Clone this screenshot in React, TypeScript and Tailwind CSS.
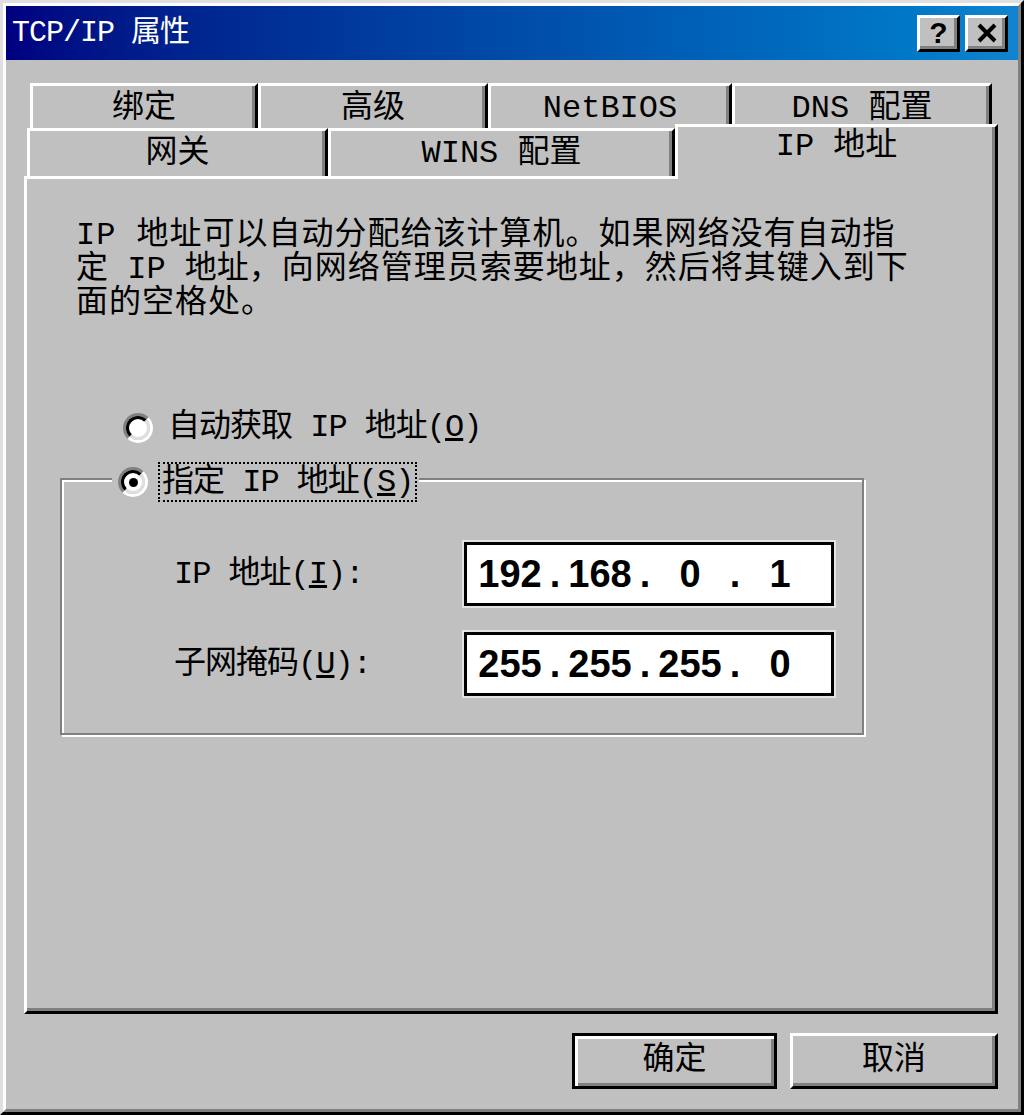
import React from 'react';

const FONT = "font-['Liberation_Mono','Noto_Sans_CJK_SC',monospace]";

/* Win98 style raised bevel */
const RAISED =
  'border-[3px] border-t-white border-l-white border-r-black border-b-black shadow-[inset_-3px_-3px_0_#808080]';

function TitleButton({ children }: { children: React.ReactNode }) {
  return (
    <div className={`flex h-[37px] w-[43px] items-center justify-center bg-[#c0c0c0] ${RAISED}`}>
      {children}
    </div>
  );
}

function Radio({ checked }: { checked?: boolean }) {
  return (
    <span className="inline-flex size-[30px] flex-none rounded-full border-[3px] border-t-[#808080] border-l-[#808080] border-r-white border-b-white">
      <span className="flex size-full items-center justify-center rounded-full border-[3px] border-t-black border-l-black border-r-[#dfdfdf] border-b-[#dfdfdf] bg-white">
        {checked && <span className="size-[9px] rounded-full bg-black" />}
      </span>
    </span>
  );
}

function BackTab({ label, w }: { label: string; w: string }) {
  return (
    <div
      className={`${w} flex h-full justify-center border-t-[3px] border-l-[3px] border-r-[3px] border-t-white border-l-white border-r-black pt-[6px] shadow-[inset_-3px_0_0_#808080] text-[32px] leading-[33px]`}
    >
      {label}
    </div>
  );
}

function IpField({ parts }: { parts: string[] }) {
  return (
    <div className="flex h-[64px] w-[370px] items-center border-[3px] border-black bg-white pl-[8px] font-['Liberation_Sans',sans-serif] text-[38px] font-bold leading-none shadow-[0_0_0_2px_#e4e4e4]">
      {parts.map((p, i) => (
        <React.Fragment key={i}>
          <span className="w-[70px] text-center">{p}</span>
          {i < 3 && <span className="w-[20px] text-center">.</span>}
        </React.Fragment>
      ))}
    </div>
  );
}

export default function App() {
  return (
    <div
      className={`h-[1115px] w-[1024px] overflow-hidden border-[3px] border-t-[#dfdfdf] border-l-[#dfdfdf] border-r-black border-b-black bg-[#c0c0c0] text-black ${FONT}`}
    >
      <div className="flex h-full flex-col border-[3px] border-t-white border-l-white border-r-[#808080] border-b-[#808080]">
        {/* title bar */}
        <div className="flex h-[54px] flex-none items-center bg-linear-to-r from-[#000080] to-[#1084d0] pl-[6px] pr-[10px]">
          <span className="text-[30px] leading-none tracking-[-1px] text-white">TCP/IP 属性</span>
          <div className="ml-auto flex gap-[5px]">
            <TitleButton>
              <span className="font-['Liberation_Sans',sans-serif] text-[30px] font-bold leading-none">?</span>
            </TitleButton>
            <TitleButton>
              <svg width="22" height="20" viewBox="0 0 22 20">
                <path d="M3 2 L19 18 M19 2 L3 18" stroke="black" strokeWidth="4" />
              </svg>
            </TitleButton>
          </div>
        </div>

        {/* tabs */}
        <div className="ml-[18px] mr-[20px] mt-[23px] flex-none">
          <div className="flex h-[45px] pl-[6px]">
            <BackTab label="绑定" w="w-[228px]" />
            <BackTab label="高级" w="w-[230px]" />
            <BackTab label="NetBIOS" w="w-[244px]" />
            <BackTab label="DNS 配置" w="w-[260px]" />
          </div>
          <div className="relative z-10 flex h-[48px] items-end pl-[3px]">
            <div className="flex h-[48px] w-[301px] justify-center border-t-[3px] border-l-[3px] border-r-[3px] border-t-white border-l-white border-r-black bg-[#c0c0c0] pt-[6px] shadow-[inset_-3px_0_0_#808080] text-[32px] leading-[33px]">
              网关
            </div>
            <div className="flex h-[48px] w-[347px] justify-center border-t-[3px] border-l-[3px] border-r-[3px] border-t-white border-l-white border-r-black bg-[#c0c0c0] pt-[6px] shadow-[inset_-3px_0_0_#808080] text-[32px] leading-[33px]">
              WINS 配置
            </div>
            <div className="-mb-[3px] flex h-[55px] w-[323px] justify-center border-t-[3px] border-l-[3px] border-r-[3px] border-t-white border-l-white border-r-black bg-[#c0c0c0] pt-[3px] shadow-[inset_-3px_0_0_#808080] text-[32px] leading-[33px]">
              IP 地址
            </div>
          </div>

          {/* panel */}
          <div className="h-[838px] border-[3px] border-t-white border-l-white border-r-black border-b-black pl-[49px] pt-[40px] shadow-[inset_-3px_-3px_0_#808080]">
            <p className="text-[32px] leading-[34px] tracking-[1px]">
              IP 地址可以自动分配给该计算机。如果网络没有自动指
              <br />
              <span className="tracking-[0px]">定 IP 地址</span>，向网络管理员索要地址，然后将其键入到下
              <br />
              面的空格处。
            </p>

            <div className="ml-[47px] mt-[90px] flex h-[33px] items-center gap-[15px]">
              <Radio />
              <span className="text-[32px] leading-[33px] tracking-[-1px]">
                自动获取 IP 地址(<u>O</u>)
              </span>
            </div>

            {/* group box */}
            <div className="-ml-[16px] mt-[34px] w-[804px] border-2 border-[#808080] pb-[37px] shadow-[inset_2px_2px_0_white,2px_2px_0_white]">
              <div className="-mt-[18px] ml-[50px] flex h-[40px] w-fit items-center gap-[10px] bg-[#c0c0c0] pl-[6px] pr-[2px]">
                <Radio checked />
                <span className="flex h-[40px] items-center px-[4px] text-[32px] leading-[33px] tracking-[-1px] outline-2 outline-dotted outline-black -outline-offset-2">
                  指定 IP 地址(<u>S</u>)
                </span>
              </div>

              <div className="mt-[40px] grid grid-cols-[290px_370px] gap-y-[26px] pl-[112px]">
                <div className="flex items-center text-[32px] leading-[33px] tracking-[-1px]">
                  IP 地址(<u>I</u>):
                </div>
                <IpField parts={['192', '168', '0', '1']} />
                <div className="flex items-center text-[32px] leading-[33px] tracking-[-1px]">
                  子网掩码(<u>U</u>):
                </div>
                <IpField parts={['255', '255', '255', '0']} />
              </div>
            </div>
          </div>
        </div>

        {/* buttons */}
        <div className="mr-[20px] mt-[19px] flex justify-end gap-[13px]">
          <div className="flex h-[56px] w-[205px] items-center justify-center border-[3px] border-black shadow-[inset_3px_3px_0_white,inset_-3px_-3px_0_#808080] text-[32px] leading-none">
            确定
          </div>
          <div className={`flex h-[56px] w-[208px] items-center justify-center text-[32px] leading-none ${RAISED}`}>
            取消
          </div>
        </div>
      </div>
    </div>
  );
}
